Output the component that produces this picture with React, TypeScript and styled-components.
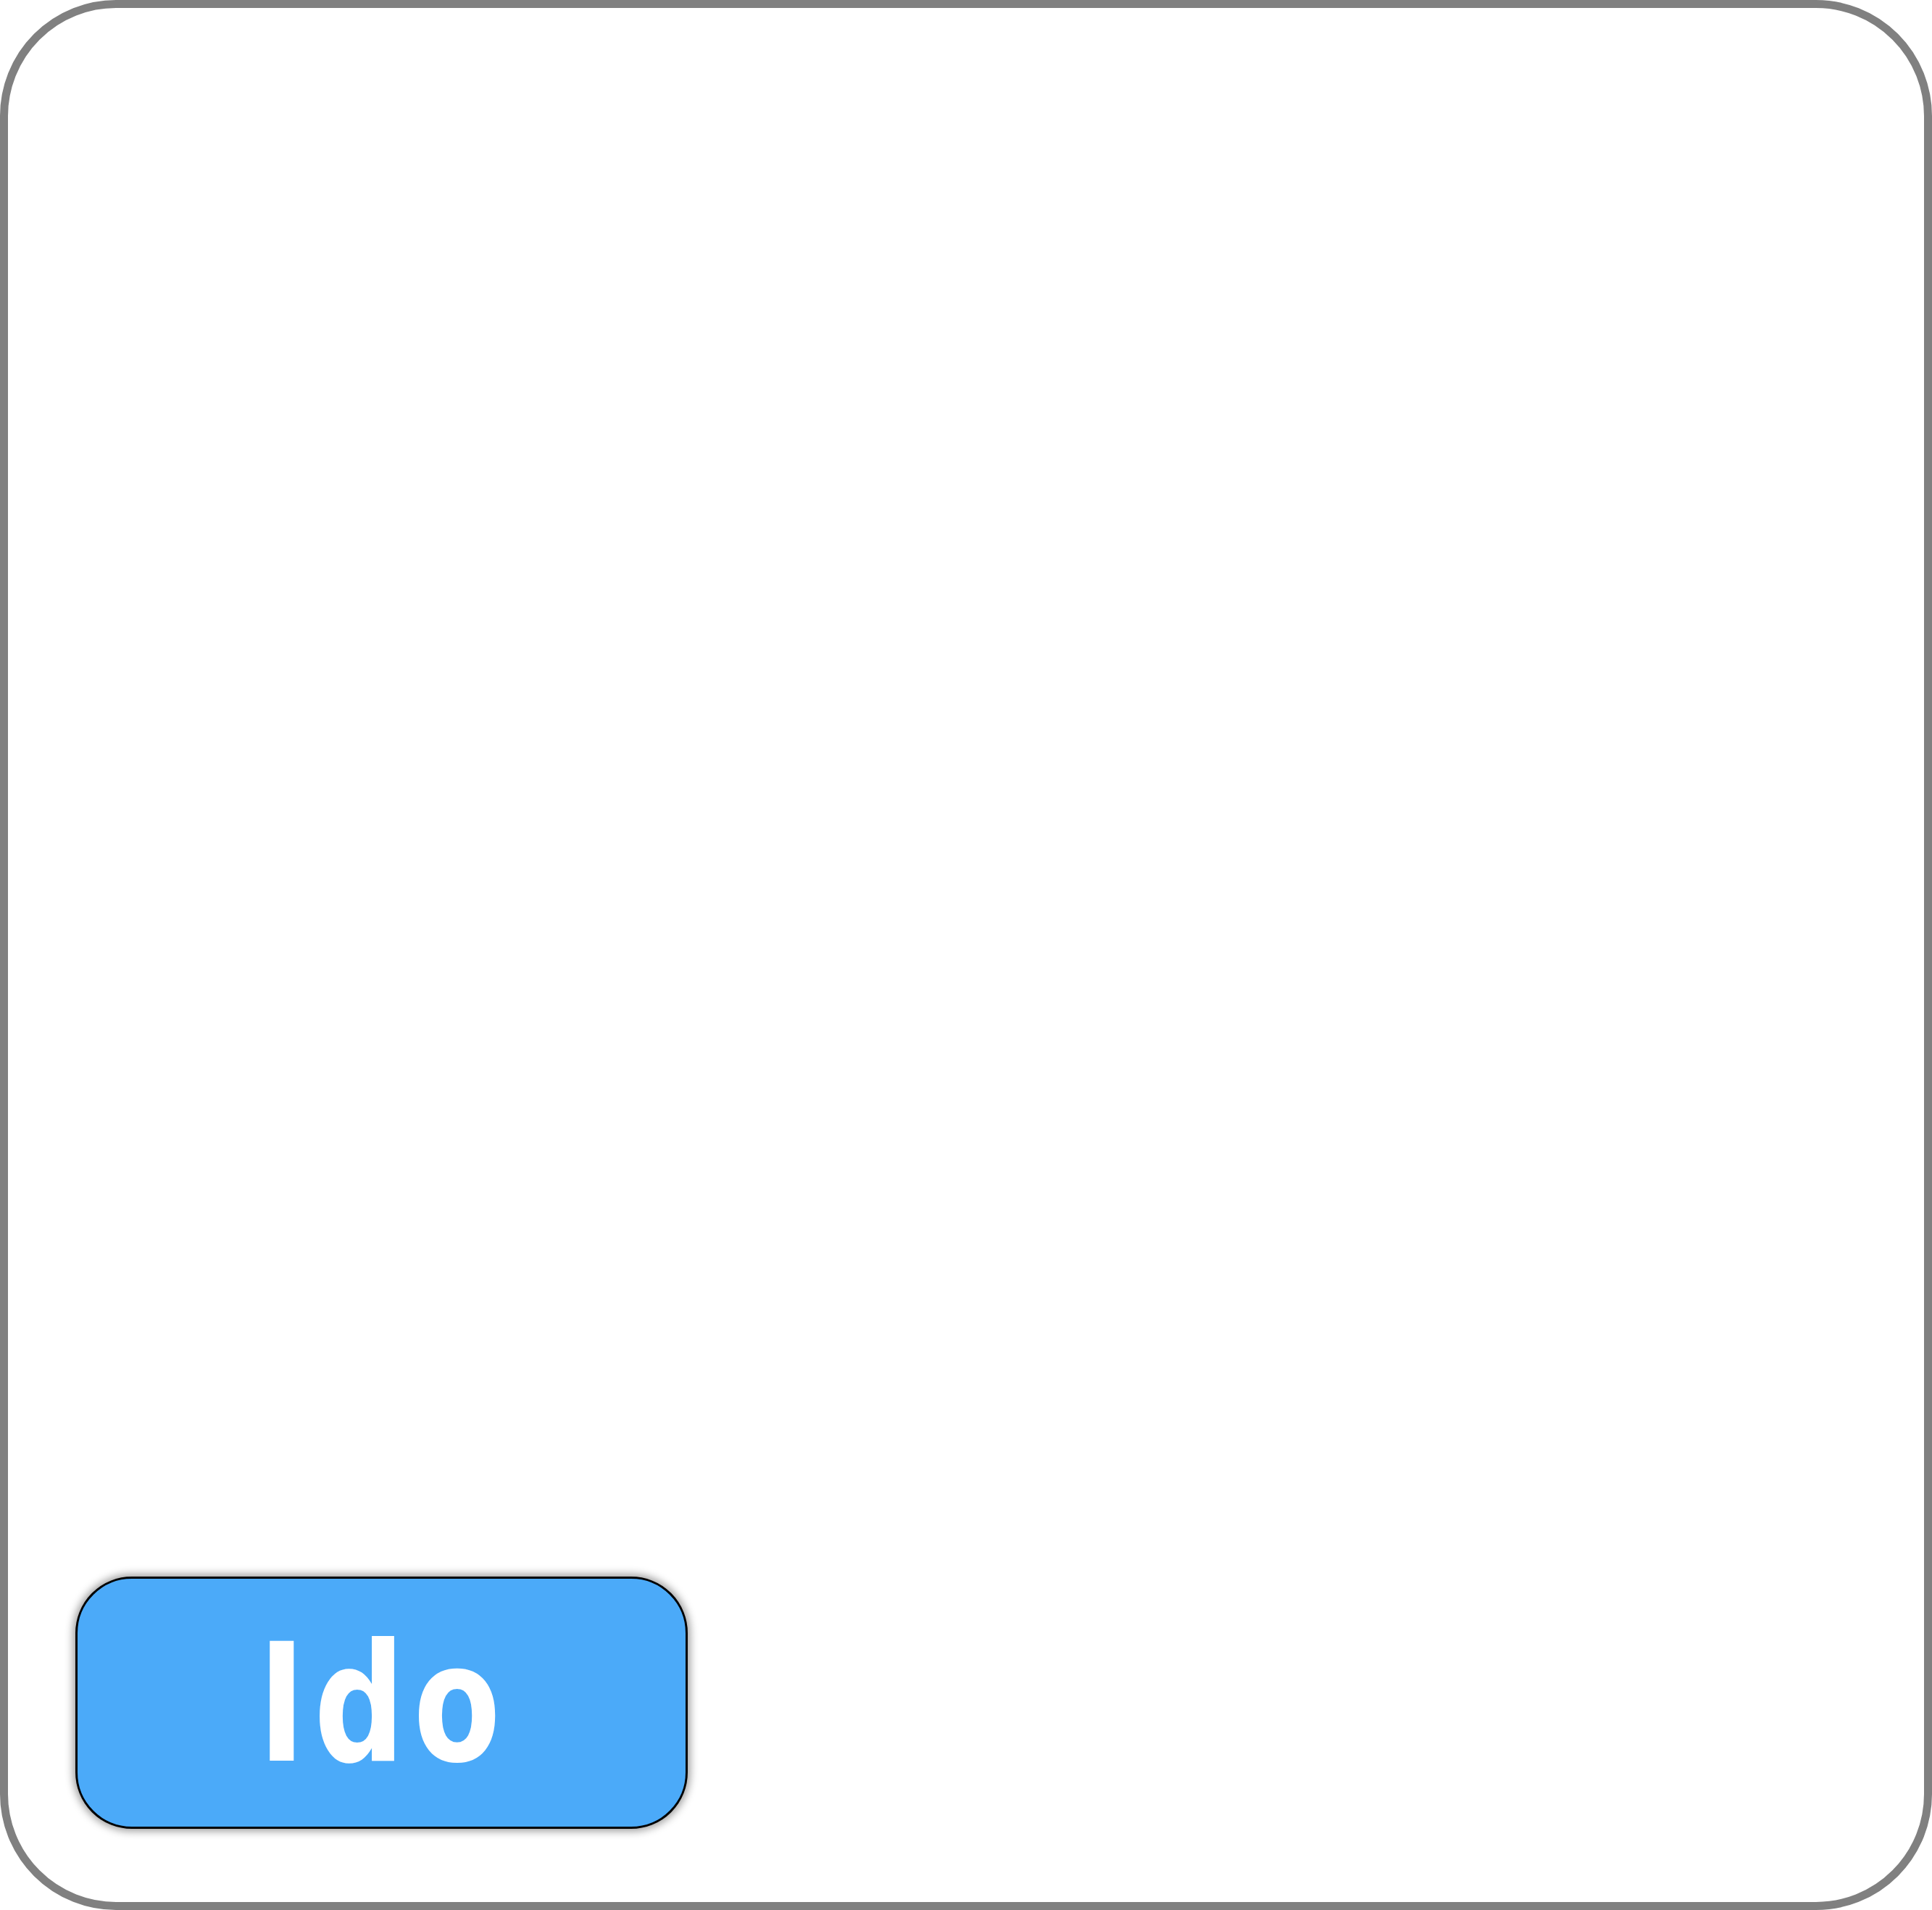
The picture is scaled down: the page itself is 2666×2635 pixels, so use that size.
import React from "react";
import styled, { createGlobalStyle } from "styled-components";

const GlobalStyle = createGlobalStyle`
  html, body {
    margin: 0;
    padding: 0;
    background: #ffffff;
  }
  * {
    box-sizing: border-box;
  }
`;

export default function App() {
  return (
    <>
      <GlobalStyle />
      <Frame>
        <ActionButton type="button">
          <Label>Ido</Label>
        </ActionButton>
      </Frame>
    </>
  );
}

const Frame = styled.div`
  width: 100%;
  height: 100vh;
  border: 11px solid #808080;
  border-radius: 160px;
  background: #ffffff;
  display: flex;
  flex-direction: column;
  justify-content: flex-end;
  align-items: flex-start;
  padding: 0 0 101px 93px;
`;

const ActionButton = styled.button`
  width: 845px;
  height: 348px;
  background: #4baaf9;
  color: #ffffff;
  border: 3px solid #000000;
  border-radius: 78px;
  box-shadow: 0 0 12px 3px rgba(0, 0, 0, 0.4);
  padding: 0 0 0 6px;
  display: flex;
  align-items: center;
  justify-content: center;
  cursor: pointer;
`;

const Label = styled.span`
  display: inline-block;
  font-family: "DejaVu Sans Condensed", "DejaVu Sans", sans-serif;
  font-stretch: condensed;
  font-weight: 700;
  font-size: 226px;
  line-height: 1;
  letter-spacing: 14px;
  transform: scaleX(0.86);
  margin-top: 4px;
`;
